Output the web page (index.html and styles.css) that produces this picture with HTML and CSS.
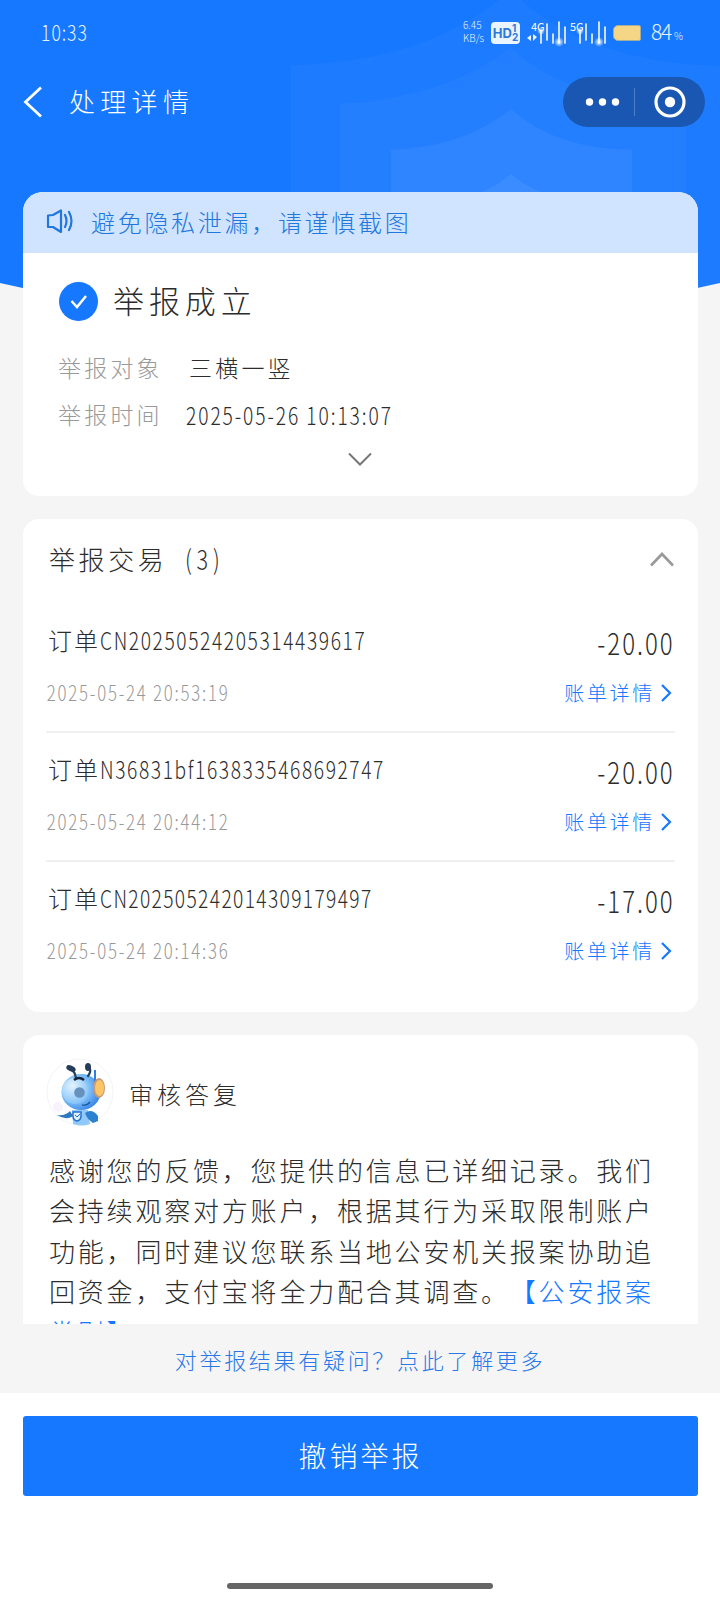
FILE: index.html
```html
<!DOCTYPE html>
<html lang="zh-CN">
<head>
<meta charset="utf-8">
<title>处理详情</title>
<link rel="stylesheet" href="styles.css">
</head>
<body>
<svg class="hero" viewBox="0 0 720 300" width="720" height="300">
  <path fill="#1677ff" d="M0 0H720V283Q540 325 360 325T0 283Z"/>
  <g fill="#fff">
    <path opacity=".03" d="M511-10Q580 62 720 66V300H291V65Q430 62 511-10Z"/>
    <path opacity=".03" d="M511 48Q570 103 686 104V300H340V104Q445 98 511 48Z"/>
    <path opacity=".05" d="M511 109Q555 149 632 150V300H391V150Q465 147 511 109Z"/>
    <path opacity=".06" d="M511 174Q525 186 543 193H479Q497 186 511 174Z"/>
  </g>
</svg>
<header class="status">
  <span class="clock num">10:33</span>
  <div class="indicators">
    <span class="speed"><span>6.45</span><span>KB/s</span></span>
    <span class="hd">HD<span class="hd-n"><i>1</i><i>2</i></span></span>
    <svg class="signal" width="80" height="28" viewBox="0 0 80 28">
      <defs><radialGradient id="glow"><stop offset="0" stop-color="#fff"/><stop offset="1" stop-color="#fff" stop-opacity="0"/></radialGradient></defs>
      <g stroke="#eaf3ff" stroke-width="1.7" stroke-linecap="round">
        <path d="M14 13V24M20 5V21M26 15V24M32 3V24M38 8V24M53 13V24M59 5V21M65 15V24M72 3V24M78 8V24"/>
      </g>
      <path fill="#eaf3ff" d="M0 19l4-3v6zM6 15l4 3-4 4z"/>
      <g fill="url(#glow)"><circle cx="14" cy="12" r="4"/><circle cx="32" cy="23" r="5"/><circle cx="53" cy="12" r="4"/><circle cx="72" cy="23" r="5"/></g>
      <g class="net"><text x="4" y="12">4G</text><text x="43" y="12">5G</text></g>
    </svg>
    <span class="battery"></span>
    <span class="pct"><span>84</span><small>%</small></span>
  </div>
</header>
<nav class="nav">
  <svg width="20" height="32" viewBox="0 0 20 32" fill="none" stroke="#fff" stroke-width="2.8"><path d="M18 1.500L2.500 16 18 30.500"/></svg>
  <h1>处理详情</h1>
  <div class="capsule">
    <svg width="142" height="50" viewBox="0 0 142 50">
      <g fill="#fff"><circle cx="26.500" cy="25" r="3.700"/><circle cx="39.500" cy="25" r="3.700"/><circle cx="52.500" cy="25" r="3.700"/><circle cx="107" cy="25" r="5.200"/></g>
      <path d="M71.500 11V39" stroke="#4b7fc9"/>
      <circle cx="107" cy="25" r="14" fill="none" stroke="#fff" stroke-width="3.200"/>
    </svg>
  </div>
</nav>
<main class="content">
  <section class="card result">
    <div class="notice">
      <svg width="28" height="25" viewBox="0 0 28 25" fill="none" stroke="#2277dd" stroke-width="2.200" stroke-linejoin="round" stroke-linecap="round"><path d="M2 6.500L7 6 15 1.500V23L7 18H2ZM19 6Q22 12 19 18M23 3Q28 12 23 21"/></svg>
      <span>避免隐私泄漏，请谨慎截图</span>
    </div>
    <div class="verdict">
      <svg width="39" height="39" viewBox="0 0 39 39"><circle cx="19.500" cy="19.500" r="19.500" fill="#1677ff"/><path d="M12.500 19L18 25 27 14" fill="none" stroke="#fff" stroke-width="2.500"/></svg>
      <h2>举报成立</h2>
    </div>
    <dl class="facts">
      <dt>举报对象</dt><dd class="name">三横一竖</dd>
      <dt>举报时间</dt><dd><span class="num time">2025-05-26 10:13:07</span></dd>
    </dl>
    <svg class="expand" width="26" height="14" viewBox="0 0 26 14" fill="none" stroke="#777" stroke-width="2"><path d="M2 1.500L13 12.500 24 1.500"/></svg>
  </section>

  <section class="card orders">
    <div class="orders-head">
      <h3>举报交易<span class="num count">(3)</span></h3>
      <svg width="24" height="15" viewBox="0 0 24 15" fill="none" stroke="#999" stroke-width="2.600"><path d="M1 13.500L12 2 23 13.500"/></svg>
    </div>
    <article class="order">
      <div class="row"><span class="oid">订单<span class="num">CN20250524205314439617</span></span><span class="num amount">-20.00</span></div>
      <div class="row sub"><span class="num date">2025-05-24 20:53:19</span><a class="link">账单详情<svg width="12" height="18" viewBox="0 0 12 18"><path d="M2 1L10 9 2 17"/></svg></a></div>
    </article>
    <article class="order">
      <div class="row"><span class="oid">订单<span class="num">N36831bf1638335468692747</span></span><span class="num amount">-20.00</span></div>
      <div class="row sub"><span class="num date">2025-05-24 20:44:12</span><a class="link">账单详情<svg width="12" height="18" viewBox="0 0 12 18"><path d="M2 1L10 9 2 17"/></svg></a></div>
    </article>
    <article class="order">
      <div class="row"><span class="oid">订单<span class="num tight">CN202505242014309179497</span></span><span class="num amount">-17.00</span></div>
      <div class="row sub"><span class="num date">2025-05-24 20:14:36</span><a class="link">账单详情<svg width="12" height="18" viewBox="0 0 12 18"><path d="M2 1L10 9 2 17"/></svg></a></div>
    </article>
  </section>

  <section class="card reply">
    <div class="reply-head">
      <svg width="68" height="68" viewBox="0 0 68 68">
        <defs>
          <radialGradient id="face" cx=".35" cy=".4" r=".75"><stop offset="0" stop-color="#d3edff"/><stop offset=".5" stop-color="#7dbef8"/><stop offset="1" stop-color="#2878e0"/></radialGradient>
          <radialGradient id="eye" cx=".4" cy=".3" r=".7"><stop offset="0" stop-color="#e2f3ff"/><stop offset="1" stop-color="#86c3f8"/></radialGradient>
        </defs>
        <circle cx="34" cy="34" r="33" fill="#fff" stroke="#f1f3f6"/>
        <circle cx="12" cy="49" r="5" fill="#f7f2fc"/>
        <path d="M26 52H42L44 66Q36 69 27 66Z" fill="#8fcafa"/>
        <path d="M11 57Q20 58 24 53L27 58Q20 63 11 57Z" fill="#2d79bd"/>
        <path d="M39 55Q46 50 52 58V63L47 65Q41 61 39 55Z" fill="#2c80d0"/>
        <ellipse cx="35" cy="34" rx="19.500" ry="18" fill="url(#face)"/>
        <circle cx="29" cy="33" r="13" fill="url(#eye)"/>
        <circle cx="33.500" cy="34.500" r="5.300" fill="#6591bd"/>
        <path d="M30 20Q29 13 24 11M42 18Q46 13 43 8" fill="none" stroke="#253f60" stroke-width="2.200" stroke-linecap="round"/>
        <ellipse cx="25" cy="10.500" rx="5" ry="2.800" fill="#263d59" transform="rotate(25 25 10.500)"/>
        <ellipse cx="42" cy="9" rx="3" ry="4" fill="#263d59"/>
        <path d="M28 22Q33 18 38 22" fill="none" stroke="#142238" stroke-width="2.500"/>
        <path d="M49 12V24" stroke="#2d7fe5" stroke-width="2"/>
        <ellipse cx="53" cy="30" rx="6" ry="10" fill="#c59879"/><ellipse cx="53.500" cy="30" rx="4.500" ry="8" fill="#fbc568"/>
        <path d="M36 47Q41 48 44 44" fill="none" stroke="#185ca5" stroke-width="1.300"/>
        <path d="M27 54h8v4q0 4-4 5-4-1-4-5z" fill="#dff1ff" stroke="#2770d0" stroke-width="1.500"/><path d="M29 57l2 2 3-3" fill="none" stroke="#2770d0"/>
      </svg>
      <h3>审核答复</h3>
    </div>
    <p>感谢您的反馈，您提供的信息已详细记录。我们<br>会持续观察对方账户，根据其行为采取限制账户<br>功能，同时建议您联系当地公安机关报案协助追<br>回资金，支付宝将全力配合其调查。<a>【公安报案<br>类别】</a></p>
  </section>
</main>
<div class="help"><a>对举报结果有疑问？点此了解更多</a></div>
<footer class="actions">
  <button class="revoke">撤销举报</button>
  <div class="home"></div>
</footer>
</body>
</html>
```

FILE: styles.css
```css
* { box-sizing: border-box; margin: 0; padding: 0; }
body {
  width: 720px; height: 1600px; overflow: hidden; position: relative;
  display: flex; flex-direction: column;
  background: #f5f5f5; color: #2c2c2c;
  font-family: "Noto Sans CJK SC", sans-serif; font-weight: 300;
  text-spacing-trim: space-all;
}
h1, h2, h3 { font-weight: 300; }
i { font-style: normal; }
.hero { position: absolute; top: 0; left: 0; z-index: -1; }
/* condensed, widely tracked numerals */
.num { display: inline-block; white-space: nowrap; transform: scaleX(.8); transform-origin: 0 50%; }

.status { height: 65px; padding: 0 36px 0 41px; display: flex; align-items: center; justify-content: space-between; color: #e6f2ff; }
.clock { font-size: 22px; letter-spacing: 1.200px; padding-bottom: 3px; }
.indicators { display: flex; align-items: center; }
.speed { display: flex; flex-direction: column; width: 28px; padding-bottom: 3px; font-size: 10px; line-height: 13px; }
.speed span { height: 13px; }
.hd { display: flex; align-items: center; justify-content: center; width: 29px; height: 22px; border-radius: 4px; background: #eaf4ff; color: #3079d8; font: 700 13px Inter, sans-serif; }
.hd-n { display: flex; flex-direction: column; font-size: 10px; line-height: 9px; }
.signal { margin-left: 7px; }
.net { fill: #fff; font-size: 11px; font-weight: 400; }
.battery { width: 28px; height: 16px; margin-left: 6px; border-radius: 5px 2px 2px 5px; background: #f4d686; border: 1px solid #a5ad9e; }
.pct { width: 33px; margin-left: 10px; padding-bottom: 3px; white-space: nowrap; font-size: 21px; letter-spacing: -1.200px; }
.pct small { font-size: 10px; margin-left: 3px; }

.nav { height: 127px; padding: 12px 15px 0 23px; display: flex; align-items: flex-start; }
.nav > svg { margin-top: 9px; }
.nav h1 { margin-left: 26px; font-size: 26px; line-height: 47px; letter-spacing: 5.300px; color: #fff; }
.capsule { margin-left: auto; width: 142px; height: 50px; border-radius: 25px; background: #1957b2; }

.content { flex: none; height: 1132px; overflow: hidden; padding: 0 22px 0 23px; display: flex; flex-direction: column; gap: 23px; }
.card { flex: none; background: #fff; border-radius: 16px; overflow: hidden; }
.result { height: 304px; border-radius: 20px 20px 16px 16px; display: flex; flex-direction: column; }
.notice { height: 61px; padding: 0 0 3px 23px; display: flex; align-items: center; background: #d0e4ff; color: #2277dd; font-size: 24px; letter-spacing: 2.700px; }
.notice span { margin-left: 17px; }
.verdict { display: flex; align-items: center; height: 52px; margin: 22px 0 0 36px; }
.verdict h2 { margin-left: 15px; padding-bottom: 3px; font-size: 31px; line-height: 50px; letter-spacing: 4.900px; }
.facts { display: grid; grid-template-columns: 128px 1fr; margin: 17px 0 0 35px; font-size: 23px; line-height: 47px; letter-spacing: 3.200px; }
.facts dt { color: #999; }
.facts .name { padding-left: 3px; }
.time { font-size: 24px; letter-spacing: 2.400px; }
.expand { margin: 13px auto 0; position: relative; left: -1px; }

.orders { height: 493px; padding: 0 23px; }
.orders-head { height: 85px; display: flex; align-items: center; justify-content: space-between; padding: 0 1px 4px 3px; }
.orders-head h3 { font-size: 26px; letter-spacing: 3.600px; padding-bottom: 2px; }
.count { margin-left: 18px; font-size: 27px; letter-spacing: 6px; }
.order { height: 129px; padding-top: 12px; border-bottom: 2px solid #f0f0f0; }
.order:last-child { border: 0; }
.row { display: flex; justify-content: space-between; align-items: center; height: 50px; }
.oid { padding: 0 0 3px 2px; font-size: 24px; letter-spacing: 2px; }
.oid .tight { letter-spacing: 1.700px; }
.amount { font-size: 30px; letter-spacing: 2.500px; padding-top: 2px; transform-origin: 100% 50%; }
.sub { margin-top: 1px; }
.date { color: #999; font-size: 21px; letter-spacing: 2.200px; padding-left: 1px; }
.link { display: flex; align-items: center; color: #1677ff; font-size: 20px; letter-spacing: 2.700px; padding-right: 3px; }
.link svg { margin: 1px 0 0 5px; fill: none; stroke: #1677ff; stroke-width: 2.200; }

.reply { height: 330px; padding: 23px 23px; }
.reply-head { display: flex; align-items: center; }
.reply-head h3 { margin-left: 15px; padding-top: 3px; font-size: 24px; letter-spacing: 4px; }
.reply p { margin: 24px 0 0 3px; font-size: 26px; line-height: 40.400px; letter-spacing: 2.800px; white-space: nowrap; }
.reply a { color: #1677ff; }

.help { height: 69px; display: flex; align-items: center; justify-content: center; color: #2878e8; font-size: 22px; letter-spacing: 2.700px; }
.actions { flex: 1; background: #fff; padding: 23px 22px 0 23px; display: flex; flex-direction: column; align-items: center; }
.revoke { width: 100%; height: 80px; border: 0; border-radius: 3px; background: #1677ff; color: #fff; font: 300 28px "Noto Sans CJK SC", sans-serif; letter-spacing: 3px; padding-bottom: 2px; }
.home { width: 266px; height: 6px; margin: 87px 1px 0 0; border-radius: 3px; background: #666; }
```
